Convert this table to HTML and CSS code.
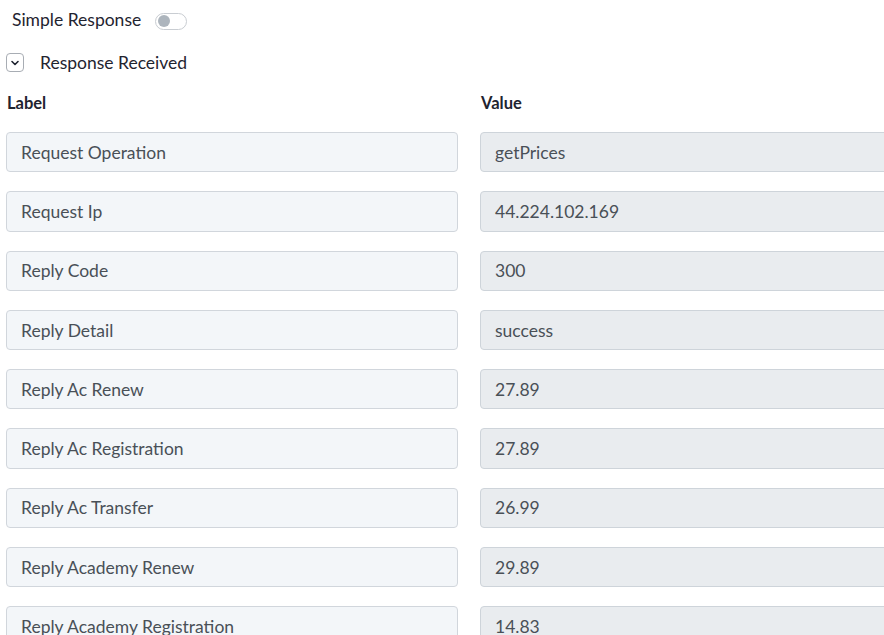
FILE: index.html
```html
<!DOCTYPE html>
<html lang="en">
<head>
<meta charset="utf-8">
<title>Response</title>
<link rel="stylesheet" href="styles.css">
</head>
<body>
<div class="page">
  <div class="toggle-row">
    <span class="toggle-label">Simple Response</span>
    <span class="switch"><span class="knob"></span></span>
  </div>
  <div class="section-row">
    <span class="chev-box">
      <svg width="10" height="10" viewBox="0 0 10 10"><path d="M2 3.5 L5 6.5 L8 3.5" fill="none" stroke="#1f2430" stroke-width="1.6" stroke-linecap="round" stroke-linejoin="round"/></svg>
    </span>
    <span class="section-title">Response Received</span>
  </div>
  <div class="grid">
    <div class="head">Label</div>
    <div class="head">Value</div>

    <div class="field label-field">Request Operation</div>
    <div class="field value-field">getPrices</div>

    <div class="field label-field">Request Ip</div>
    <div class="field value-field">44.224.102.169</div>

    <div class="field label-field">Reply Code</div>
    <div class="field value-field">300</div>

    <div class="field label-field">Reply Detail</div>
    <div class="field value-field">success</div>

    <div class="field label-field">Reply Ac Renew</div>
    <div class="field value-field">27.89</div>

    <div class="field label-field">Reply Ac Registration</div>
    <div class="field value-field">27.89</div>

    <div class="field label-field">Reply Ac Transfer</div>
    <div class="field value-field">26.99</div>

    <div class="field label-field">Reply Academy Renew</div>
    <div class="field value-field">29.89</div>

    <div class="field label-field">Reply Academy Registration</div>
    <div class="field value-field">14.83</div>
  </div>
</div>
</body>
</html>
```

FILE: styles.css
```css
html, body {
  margin: 0;
  padding: 0;
  background: #ffffff;
  overflow: hidden;
}
body {
  font-family: Lato, "Open Sans", sans-serif;
  color: #1f2430;
  width: 884px;
  height: 635px;
}
.page {
  padding: 0 0 0 6px;
  width: 960px;
}
.toggle-row {
  display: flex;
  align-items: center;
  height: 20px;
  margin-top: 9px;
  padding-left: 6px;
  gap: 14px;
}
.toggle-label {
  font-size: 17.5px;
}
.switch {
  box-sizing: border-box;
  width: 32px;
  height: 17px;
  border: 1px solid #c9cdd2;
  border-radius: 9px;
  background: #fff;
  display: flex;
  align-items: center;
  padding-left: 2px;
  margin-top: 4px;
}
.knob {
  width: 12px;
  height: 12px;
  border-radius: 50%;
  background: #adb5bd;
}
.section-row {
  display: flex;
  align-items: center;
  margin-top: 23px;
  gap: 16px;
}
.chev-box {
  box-sizing: border-box;
  width: 18px;
  height: 19px;
  border: 1px solid #a8adb4;
  border-radius: 4px;
  display: flex;
  align-items: center;
  justify-content: center;
}
.section-title {
  font-size: 17.5px;
}
.grid {
  display: grid;
  grid-template-columns: 452px 452px;
  column-gap: 22px;
  row-gap: 19px;
  margin-top: 20px;
}
.head {
  font-weight: bold;
  font-size: 16.5px;
  margin-bottom: 0;
  padding-left: 1px;
}
.field {
  box-sizing: border-box;
  height: 40.3px;
  border-radius: 4px;
  display: flex;
  align-items: center;
  padding-left: 14px;
  font-size: 17.5px;
  color: #495057;
}
.label-field {
  background: #f3f6f9;
  border: 1px solid #d1d6dc;
}
.value-field {
  background: #e9ecef;
  border: 1px solid #ced4da;
}
```
